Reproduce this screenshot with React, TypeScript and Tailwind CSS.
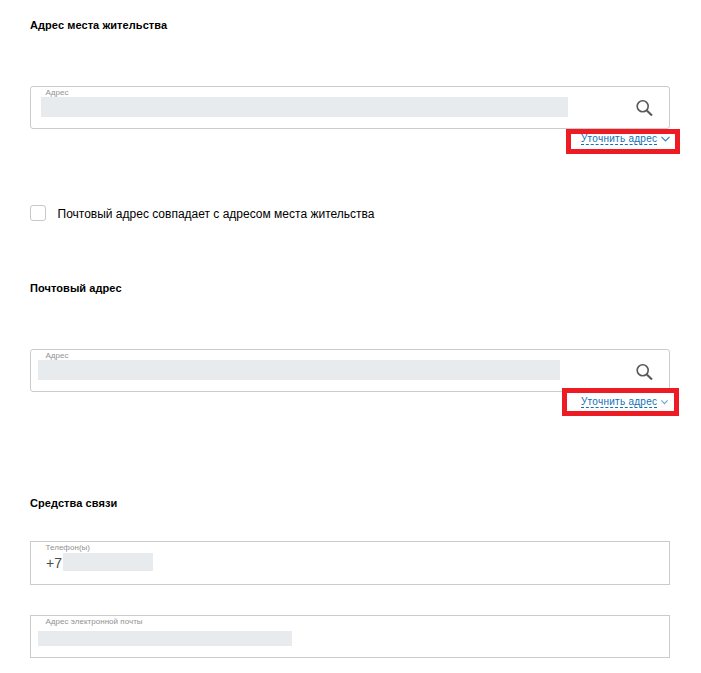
import React from 'react'
import clsx from 'clsx'

type FieldProps = {
  label: string
  className?: string
  children?: React.ReactNode
}

const Title: React.FC<{ children: string; className?: string }> = ({ children, className }) => (
  <h2 className={clsx('h-4 text-[11px] leading-4 font-bold tracking-[0.07px] whitespace-nowrap text-black', className)}>
    {children}
  </h2>
)

const Field: React.FC<FieldProps> = ({ label, className, children }) => (
  <div className={clsx('relative w-[640px] border border-[#cbcbcb] bg-white', className)}>
    <div className="h-[10px] pt-px pl-[14.5px] text-[8px] leading-[10px] tracking-[0.03px] whitespace-nowrap text-[#929292]">
      {label}
    </div>
    {children}
  </div>
)

const SearchIcon: React.FC<{ className?: string }> = ({ className }) => (
  <svg
    className={clsx('absolute right-[16.5px] h-4 w-[17px]', className)}
    viewBox="0 0 17 16"
    fill="none"
    stroke="#58585a"
  >
    <circle cx="6.7" cy="6.3" r="5.5" strokeWidth="1.6" />
    <path d="M10.8 10.4L16 15.5" strokeWidth="2.1" />
  </svg>
)

const ClarifyLink: React.FC<{ light?: boolean }> = ({ light }) => (
  <a href="#" className="flex h-[12px] items-start text-[#0f70b7]">
    <span className="h-[12px] w-[76px] border-b border-dashed border-[#0f70b7] text-[10px] leading-[11px] tracking-[0.26px] whitespace-nowrap">
      Уточнить адрес
    </span>
    <svg
      className={clsx('mt-[3px] ml-[4px] h-[6px]', light ? 'w-[7px]' : 'w-[9px]')}
      viewBox={light ? '0 0 7 6' : '0 0 9 6'}
      fill="none"
      stroke={light ? '#69a9d4' : '#2a80bf'}
      strokeWidth="1.1"
    >
      <path d={light ? 'M0.4 1.4L3.5 4.6L6.6 1.4' : 'M0.5 0.8L4.5 4.9L8.5 0.8'} />
    </svg>
  </a>
)

const App: React.FC = () => {
  return (
    <div className="h-[673px] w-[701px] overflow-hidden bg-white px-[30px] pt-[17px] font-['Liberation_Sans',Arial,sans-serif]">
      <section className="h-[188px]">
        <Title>Адрес места жительства</Title>
        <Field label="Адрес" className="mt-[53px] h-[43px] rounded-[3px]">
          <div className="ml-[10px] h-5 w-[527px] bg-[#e7ebee]" />
          <SearchIcon className="top-[13px]" />
        </Field>
        <div className="relative flex h-[25px] pt-[4px] pl-[551px]">
          <ClarifyLink />
          <div className="absolute top-0 left-[536px] h-[25px] w-[114px] border-5 border-[#ed1c24]" />
        </div>
      </section>

      <label className="flex h-4 items-center">
        <span className="h-4 w-4 shrink-0 rounded-[3px] border border-[#c8c8c8]" />
        <span className="ml-[11.5px] pt-px text-[12px] leading-4 whitespace-nowrap text-black">
          Почтовый адрес совпадает с адресом места жительства
        </span>
      </label>

      <section className="mt-[59px] h-[215px]">
        <Title>Почтовый адрес</Title>
        <Field label="Адрес" className="mt-[53px] h-[43px] rounded-[3px]">
          <div className="ml-[7px] h-5 w-[522px] bg-[#e7ebee]" />
          <SearchIcon className="top-[14px]" />
        </Field>
        <div className="relative flex h-[25px] pt-[4px] pl-[551px]">
          <ClarifyLink light />
          <div className="absolute -top-[4px] left-[532px] h-[28px] w-[117px] border-5 border-[#ed1c24]" />
        </div>
      </section>

      <section>
        <Title>Средства связи</Title>
        <Field label="Телефон(ы)" className="mt-[30px] h-[44px]">
          <div className="flex pt-px pl-[15px]">
            <span className="w-[17px] text-[14px] leading-5 text-[#4a4a4a]">+7</span>
            <div className="h-[18px] w-[90px] bg-[#e7ebee]" />
          </div>
        </Field>
        <Field label="Адрес электронной почты" className="mt-[30px] h-[43px]">
          <div className="mt-[5px] ml-[7px] h-[15px] w-[254px] bg-[#e7ebee]" />
        </Field>
      </section>
    </div>
  )
}

export default App
